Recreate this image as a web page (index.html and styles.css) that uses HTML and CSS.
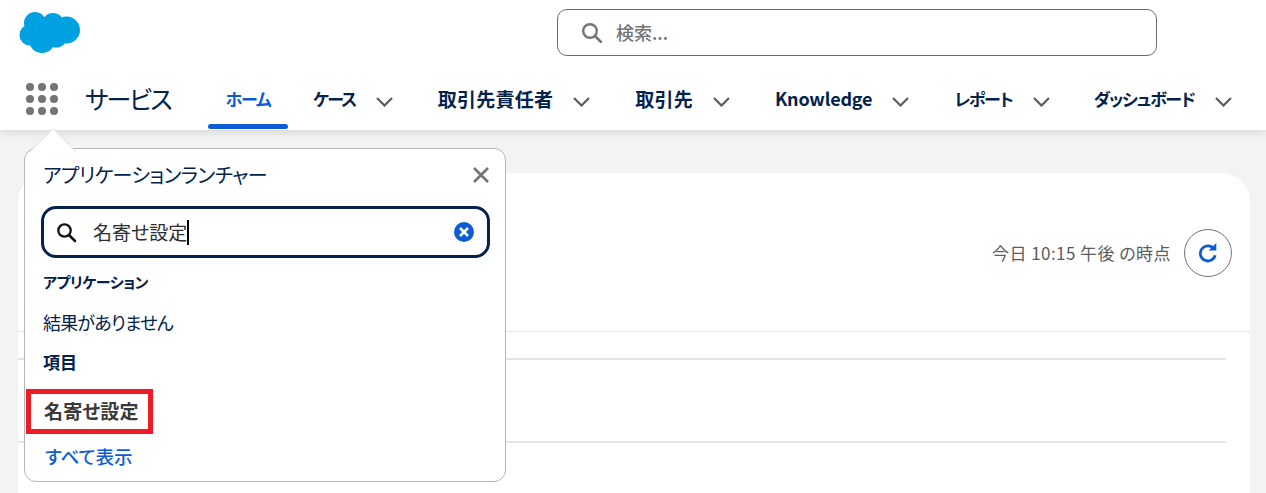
FILE: index.html
```html
<!DOCTYPE html>
<html lang="ja">
<head>
<meta charset="utf-8">
<title>サービス</title>
<link rel="stylesheet" href="styles.css">
</head>
<body>
<header class="header">
  <div class="top">
    <svg class="logo" width="62" height="44" viewBox="0 0 62 44"><g fill="#00a1e0"><circle cx="16" cy="12" r="11"/><circle cx="34" cy="13" r="11"/><circle cx="47.500" cy="19" r="13.500"/><circle cx="11" cy="24" r="10.500"/><circle cx="23" cy="29" r="13"/><circle cx="37" cy="25" r="11.500"/></g></svg>
    <div class="global-search">
      <svg class="ic" width="20" height="20" viewBox="0 0 20 20"><circle cx="8" cy="8" r="6.800" fill="none" stroke="#747474" stroke-width="2.400"/><path d="M13 13l6 6" stroke="#747474" stroke-width="2.600" stroke-linecap="round"/></svg>
      <span class="global-text">検索...</span>
    </div>
  </div>
  <nav class="nav">
    <svg class="waffle" width="32" height="32" viewBox="0 0 32 32"><g fill="#747474"><circle cx="4" cy="4" r="4"/><circle cx="16" cy="4" r="4"/><circle cx="28" cy="4" r="4"/><circle cx="4" cy="16" r="4"/><circle cx="16" cy="16" r="4"/><circle cx="28" cy="16" r="4"/><circle cx="4" cy="28" r="4"/><circle cx="16" cy="28" r="4"/><circle cx="28" cy="28" r="4"/></g></svg>
    <span class="app-name">サービス</span>
    <ul class="tabs">
      <li class="tab kana active">ホーム</li>
      <li class="tab kana tight">ケース<svg class="chev" width="19" height="11" viewBox="0 0 19 11"><path d="M2 2l7.500 7.500L17 2" fill="none" stroke="#5c5c5c" stroke-width="2.200"/></svg></li>
      <li class="tab kanji">取引先責任者<svg class="chev" width="19" height="11" viewBox="0 0 19 11"><path d="M2 2l7.500 7.500L17 2" fill="none" stroke="#5c5c5c" stroke-width="2.200"/></svg></li>
      <li class="tab kanji">取引先<svg class="chev" width="19" height="11" viewBox="0 0 19 11"><path d="M2 2l7.500 7.500L17 2" fill="none" stroke="#5c5c5c" stroke-width="2.200"/></svg></li>
      <li class="tab latin">Knowledge<svg class="chev" width="19" height="11" viewBox="0 0 19 11"><path d="M2 2l7.500 7.500L17 2" fill="none" stroke="#5c5c5c" stroke-width="2.200"/></svg></li>
      <li class="tab kana">レポート<svg class="chev" width="19" height="11" viewBox="0 0 19 11"><path d="M2 2l7.500 7.500L17 2" fill="none" stroke="#5c5c5c" stroke-width="2.200"/></svg></li>
      <li class="tab kana">ダッシュボード<svg class="chev" width="19" height="11" viewBox="0 0 19 11"><path d="M2 2l7.500 7.500L17 2" fill="none" stroke="#5c5c5c" stroke-width="2.200"/></svg></li>
    </ul>
  </nav>
</header>
<main class="main">
  <section class="card">
    <div class="card-head">
      <span class="stamp">今日 10:15 午後 の時点</span>
      <button class="refresh" type="button"><svg width="20" height="20" viewBox="0 0 18 18"><path d="M14.500 5.500A6.800 6.800 0 1 0 15.500 11" fill="none" stroke="#0b5cd5" stroke-width="2.500"/><path d="M9.500 6.800h7V0z" fill="#0b5cd5"/></svg></button>
    </div>
    <div class="card-body">
      <div class="row"></div>
      <div class="row"></div>
    </div>
  </section>
</main>
<aside class="launcher">
  <div class="arrow"></div>
  <div class="l-head">
    <h2>アプリケーションランチャー</h2>
    <svg width="18" height="18" viewBox="0 0 18 18"><path d="M2 2l14 14M16 2L2 16" stroke="#747474" stroke-width="2.600"/></svg>
  </div>
  <div class="l-search">
    <svg width="21" height="21" viewBox="0 0 21 21"><circle cx="8.500" cy="8.500" r="6.200" fill="none" stroke="#111" stroke-width="2.300"/><path d="M13 13l6 6" stroke="#111" stroke-width="2.600" stroke-linecap="round"/></svg>
    <span class="l-value">名寄せ設定</span><span class="caret"></span>
    <svg class="clear" width="20" height="20" viewBox="0 0 20 20"><circle cx="10" cy="10" r="10" fill="#0b5cd5"/><path d="M6 6l8 8M14 6l-8 8" stroke="#fff" stroke-width="2.600"/></svg>
  </div>
  <h3 class="apps">アプリケーション</h3>
  <p class="empty">結果がありません</p>
  <h3 class="items">項目</h3>
  <div class="hit">名寄せ設定</div>
  <a class="all">すべて表示</a>
  <div class="mark"></div>
</aside>
</body>
</html>
```
FILE: styles.css
```css
* { box-sizing: border-box; }
html, body { height: 100%; overflow: hidden; }
body {
  margin: 0;
  background: #f3f3f3;
  font-family: "Noto Sans CJK JP", "Noto Sans", sans-serif;
  font-feature-settings: "palt";
  color: #03234d;
  position: relative;
}
.header {
  height: 130px;
  background: #fff;
  box-shadow: 0 2px 10px rgba(0, 0, 0, .12);
  position: relative;
}
.top { height: 68px; position: relative; display: flex; padding: 11px 0 0 19px; }
.logo { flex: none; }
.global-search {
  width: 600px;
  height: 47px;
  margin: -2px 0 0 476px;
  border: 1px solid #6b6b6b;
  border-radius: 10px;
  display: flex;
  align-items: center;
  padding-left: 24px;
  gap: 14px;
  color: #747474;
  font-size: 18px;
  font-weight: 500;
}
.global-text { margin-bottom: 2px; }
.nav { display: flex; align-items: center; height: 62px; padding-left: 26px; }
.waffle { flex: none; }
.app-name {
  flex: none;
  font-size: 25px;
  letter-spacing: -2px;
  margin-left: 27px;
  width: 123px;
  line-height: 60px;
  padding-bottom: 2px;
  white-space: nowrap;
}
.tabs { list-style: none; margin: 0; padding: 0; display: flex; height: 62px; }
.tab {
  display: flex;
  align-items: center;
  font-size: 18px;
  font-weight: 700;
  line-height: 1;
  margin-right: 44px;
  padding-bottom: 2px;
  white-space: nowrap;
}
.tab.kana { font-size: 17px; letter-spacing: -1.200px; margin-right: 43px; }
.tab.tight { letter-spacing: -1.700px; margin-right: 44px; }
.tab.kanji { font-size: 19px; letter-spacing: .25px; }
.tab.latin { letter-spacing: -.2px; }
.chev { margin: 6px 0 0 19px; flex: none; }
.tab.active {
  color: #0b5cd5;
  width: 80px;
  margin-right: 25px;
  justify-content: center;
  position: relative;
}
.tab.active::after {
  content: "";
  position: absolute;
  left: 0; right: 0; bottom: 1px;
  height: 5px;
  border-radius: 3px;
  background: #0b5cd5;
}
.main { padding: 43px 16px 0 18px; }
.card { background: #fff; border-radius: 28px 28px 0 0; height: 400px; }
.card-head {
  height: 159px;
  border-bottom: 1px solid #e5e5e5;
  display: flex;
  justify-content: flex-end;
  align-items: flex-start;
  padding: 56px 18px 0 0;
  gap: 13px;
}
.stamp { font-size: 17px; letter-spacing: .45px; line-height: 48px; color: #5c5c5c; }
.refresh {
  width: 48px; height: 48px;
  border: 1px solid #747474;
  border-radius: 50%;
  background: #fff;
  padding: 0;
  display: flex;
  align-items: center;
  justify-content: center;
}
.card-body { padding: 26px 24px 0 0; }
.row { height: 83px; border-top: 2px solid #e5e5e5; }
.launcher {
  position: absolute;
  left: 24px; top: 148px;
  width: 482px; height: 334px;
  background: #fff;
  border: 1px solid #b5b5b5;
  border-radius: 12px;
  padding: 0 15px 0 18px;
}
.arrow {
  position: absolute;
  left: 11px; top: -14px;
  width: 34px; height: 34px;
  background: #fff;
  border-left: 1px solid #dfe1e6;
  border-top: 1px solid #dfe1e6;
  transform: rotate(45deg);
  clip-path: polygon(0 0, 100% 0, 0 100%);
}
.l-head { display: flex; justify-content: space-between; align-items: center; height: 56px; padding-bottom: 4px; }
.l-head h2 { margin: 0; font-size: 20px; letter-spacing: -.6px; font-weight: 400; line-height: 1; }
.l-search {
  height: 52px;
  margin: 1px 0 0 -2px;
  border: 3px solid #03234d;
  border-radius: 15px;
  display: flex;
  align-items: center;
  padding-left: 12px;
  color: #2e2e2e;
}
.l-value { font-size: 19px; margin: 0 0 2px 16px; line-height: 1; }
.caret { width: 2px; height: 25px; background: #000; }
.clear { margin-left: auto; margin-right: 13px; }
h3 { margin: 0; font-weight: 700; line-height: 24px; }
.apps { margin-top: 12px; font-size: 15px; letter-spacing: -.5px; }
.empty { margin: 16px 0 0; font-size: 18px; letter-spacing: -.8px; line-height: 24px; font-weight: 400; }
.items { margin-top: 16px; font-size: 17px; }
.hit { margin: 25px 0 0 1px; font-size: 19px; letter-spacing: .2px; font-weight: 700; color: #3a3a3a; line-height: 24px; }
.all { display: block; margin: 21px 0 0 2px; font-size: 18.500px; font-weight: 500; color: #0b5cd5; line-height: 24px; }
.mark {
  position: absolute;
  left: 1px; top: 240px;
  width: 127px; height: 45px;
  border: 5px solid #ed1c24;
}
```
